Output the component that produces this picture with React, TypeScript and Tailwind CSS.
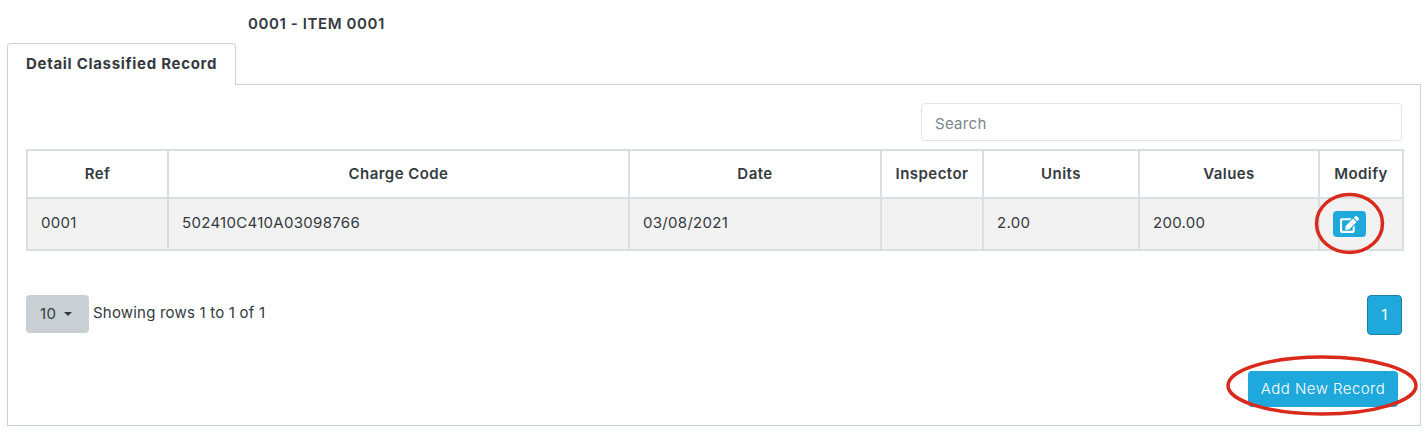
import React from 'react'

import { FaEdit } from 'react-icons/fa'

const COLUMNS = [
    { label: 'Ref', width: 'w-[141px]' },
    { label: 'Charge Code', width: 'w-[461px]' },
    { label: 'Date', width: 'w-[252px]' },
    { label: 'Inspector', width: 'w-[102px]' },
    { label: 'Units', width: 'w-[156px]' },
    { label: 'Values', width: 'w-[180px]' },
    { label: 'Modify', width: 'w-[84px]' },
]

const ROW = ['0001', '502410C410A03098766', '03/08/2021', '', '2.00', '200.00']

export default function App() {
    return (
        <div className="relative h-[432px] w-[1427px] overflow-hidden bg-white pt-[14px] pl-[7px] font-['Inter',sans-serif] text-[15px] tracking-[0.3px] text-[#343a40]">
            <div className="pl-[241px] leading-[19px] font-semibold tracking-[0.6px]">
                0001 - ITEM 0001
            </div>

            <div className="mt-[10px] flex">
                <div className="relative z-10 -mb-px flex h-[42px] w-[229px] items-center rounded-t border border-b-0 border-[#ccd3d8] bg-white pl-[18px] font-bold tracking-[0.7px]">
                    Detail Classified Record
                </div>
            </div>

            <div className="h-[342px] w-[1414px] border border-[#ccd3d8] px-[18px] pt-[18px]">
                <div className="flex justify-end">
                    <input
                        placeholder="Search"
                        className="h-[38px] w-[481px] rounded border border-[#e2e6e9] px-[13px] pt-[2px] placeholder:text-[#7b858e]"
                    />
                </div>

                <table className="mt-[8px] w-[1376px] table-fixed border-collapse border-2 border-[#d8dee1]">
                    <thead>
                        <tr className="h-[48px]">
                            {COLUMNS.map((col) => (
                                <th
                                    key={col.label}
                                    className={`${col.width} border-2 border-[#d8dee1] pt-[1px] text-center font-semibold tracking-[0.45px]`}
                                >
                                    {col.label}
                                </th>
                            ))}
                        </tr>
                    </thead>
                    <tbody>
                        <tr className="h-[52px] bg-[#f2f2f2]">
                            {ROW.map((cell, idx) => (
                                <td
                                    key={idx}
                                    className="border-2 border-[#d8dee1] px-[13px] pb-[2px]"
                                >
                                    {cell}
                                </td>
                            ))}
                            <td className="border-2 border-[#d8dee1] px-[13px]">
                                <button className="flex h-[26px] w-[33px] items-center justify-center rounded bg-[#1fa8db] text-white">
                                    <FaEdit className="h-[17px] w-[19px]" />
                                </button>
                            </td>
                        </tr>
                    </tbody>
                </table>

                <div className="mt-[44px] flex items-start justify-between">
                    <div className="flex items-start gap-[4px]">
                        <button className="flex h-[38px] w-[63px] items-center gap-[8px] rounded bg-[#c8d0d3] pl-[14px]">
                            10
                            <span className="h-0 w-0 border-x-[4px] border-t-[4px] border-x-transparent border-t-[#343a40]" />
                        </button>
                        <span className="pt-[7px] tracking-[0.2px]">Showing rows 1 to 1 of 1</span>
                    </div>
                    <button className="h-[40px] w-[35px] rounded border border-[#1b7fa6] bg-[#1fa8db] text-white">
                        1
                    </button>
                </div>

                <div className="mt-[36px] flex justify-end pr-[4px]">
                    <button className="h-[36px] w-[150px] rounded-sm bg-[#1fa8db] font-light tracking-[0.45px] text-white">
                        Add New Record
                    </button>
                </div>
            </div>

            {/* red annotation rings */}
            <svg
                className="pointer-events-none absolute top-0 left-0"
                width={1427}
                height={432}
                fill="none"
                stroke="#d92a1c"
                strokeWidth={3.5}
            >
                <ellipse cx={1349.5} cy={223.5} rx={33} ry={29} />
                <ellipse cx={1322} cy={385.5} rx={94} ry={28.5} />
            </svg>
        </div>
    )
}
